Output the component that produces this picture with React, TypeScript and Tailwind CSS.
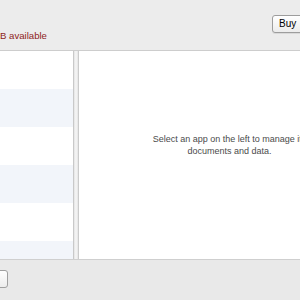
import React from 'react';

const rows = [false, true, false, true, false, true];

export default function App() {
  return (
    <div className="h-[300px] w-[300px] overflow-hidden bg-[#ececec] font-['Liberation_Sans',Arial,sans-serif]">
      <div className="flex h-[300px] w-[380px] flex-col">
        <header className="flex h-[51px] shrink-0 items-start justify-between border-b border-[#cdcdcd]">
          <span className="mt-[30px] text-[9.6px] leading-[12px] text-[#8e2323]">
            B available
          </span>
          <button
            type="button"
            className="mr-[28px] mt-[15px] h-[18px] w-[80px] rounded-[3px] border border-[#9d9d9d] bg-gradient-to-b from-white to-[#ececec] pl-[6px] text-left text-[10px] leading-[16px] text-black shadow-[0_1px_0_rgba(0,0,0,0.08)]">
            Buy
          </button>
        </header>

        <main className="flex h-[208px] shrink-0">
          <ul className="flex w-[74px] shrink-0 flex-col overflow-hidden border-r border-[#c9c9c9] bg-white">
            {rows.map((striped, i) => (
              <li
                key={i}
                className={`h-[38px] shrink-0 ${striped ? 'bg-[#f2f5fa]' : 'bg-white'}`}
              />
            ))}
          </ul>
          <div className="w-[5px] shrink-0 border-r border-[#cbcbcb] bg-gradient-to-r from-[#e4e4e4] via-[#f7f7f7] to-[#e4e4e4]" />
          <section className="flex flex-1 items-center justify-center bg-white pb-[20px]">
            <p className="w-[180px] text-center text-[9px] leading-[12px] text-[#4b4b4b]">
              Select an app on the left to manage its documents and data.
            </p>
          </section>
        </main>

        <footer className="flex flex-1 items-start border-t border-[#cfcfcf] bg-[#e9e9e9]">
          <button
            type="button"
            className="ml-[-22px] mt-[10px] h-[18px] w-[30px] rounded-[3px] border border-[#a0a0a0] bg-gradient-to-b from-white to-[#ededed]"
            aria-label="Manage"
          />
        </footer>
      </div>
    </div>
  );
}
